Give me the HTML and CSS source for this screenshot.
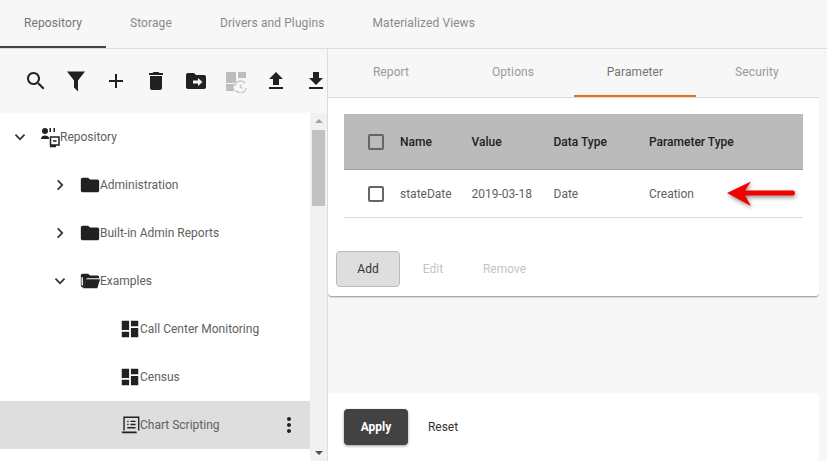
FILE: index.html
```html
<!DOCTYPE html>
<html lang="en">
<head>
    <meta charset="UTF-8">
    <meta name="viewport" content="width=device-width, initial-scale=1.0">
    <title>Repository</title>
    <link rel="stylesheet" href="styles.css">
</head>
<body>
    <nav class="main-tabs">
        <div class="main-tab active">Repository</div>
        <div class="main-tab">Storage</div>
        <div class="main-tab">Drivers and Plugins</div>
        <div class="main-tab">Materialized Views</div>
    </nav>

    <div class="content">
        <section class="left-pane">
            <div class="toolbar">
                <svg class="tool" viewBox="0 0 24 24"><path d="M15.5 14h-.79l-.28-.27C15.41 12.59 16 11.11 16 9.5 16 5.91 13.09 3 9.5 3S3 5.91 3 9.5 5.91 16 9.5 16c1.61 0 3.09-.59 4.23-1.57l.27.28v.79l5 4.99L20.49 19l-4.99-5zm-6 0C7.01 14 5 11.99 5 9.5S7.01 5 9.5 5 14 7.01 14 9.5 11.99 14 9.5 14z"/></svg>
                <svg class="tool" viewBox="0 0 24 24"><path d="M3 2.500h18l-7 9V22.500l-4-4v-7z"/></svg>
                <svg class="tool" viewBox="0 0 24 24"><path d="M19 13h-6v6h-2v-6H5v-2h6V5h2v6h6v2z"/></svg>
                <svg class="tool" viewBox="0 0 24 24"><path d="M6 19c0 1.100.9 2 2 2h8c1.100 0 2-.9 2-2V7H6v12zM19 4h-3.500l-1-1h-5l-1 1H5v2h14V4z"/></svg>
                <svg class="tool" viewBox="0 0 24 24"><path fill-rule="evenodd" d="M20 6h-8l-2-2H4c-1.100 0-2 .9-2 2v12c0 1.100.9 2 2 2h16c1.100 0 2-.9 2-2V8c0-1.100-.9-2-2-2zm-6 11v-2.500h-5v-3h5V9l4.500 4z"/></svg>
                <svg class="tool tool-off" viewBox="0 0 24 24">
                    <path d="M2 3h10v11H2zM14 3h8v6h-8zM2 15h10v7H2z"/>
                    <circle cx="16.500" cy="18" r="7" fill="#f7f7f7"/>
                    <path class="refresh" d="M11 17a5.500 5.500 0 0 1 10-2.500M22 19a5.500 5.500 0 0 1-10 2.500M16.500 15.500V18l2 1.500"/>
                </svg>
                <svg class="tool" viewBox="0 0 24 24"><path d="M9 16h6v-6h4l-7-7-7 7h4zm-4 2h14v2H5z"/></svg>
                <svg class="tool" viewBox="0 0 24 24"><path d="M19 9h-4V3H9v6H5l7 7 7-7zM5 18v2h14v-2H5z"/></svg>
            </div>

            <div class="tree-wrap">
                <ul class="tree">
                    <li class="node">
                        <svg class="toggle" viewBox="-2 -2 28 28"><path d="M7.410 8.590 12 13.170l4.590-4.580L18 10l-6 6-6-6z"/></svg>
                        <svg class="node-icon" viewBox="0 0 22 22">
                            <circle cx="6" cy="5" r="3"/>
                            <path d="M2 13c0-2.500 2-3.500 4-3.500s4 1 4 2.500v1zM10.500 2h1.500v4h-1.500zM14.500 2h1.500v4h-1.500z"/>
                            <path class="outline" d="M11.500 11h8.500v8h-8.500zM14 15h3.500M11 20.500h6"/>
                        </svg>
                        <span>Repository</span>
                    </li>
                    <li class="node level-1">
                        <svg class="toggle" viewBox="-2 -2 28 28"><path d="M8.590 16.590 13.170 12 8.590 7.410 10 6l6 6-6 6z"/></svg>
                        <svg class="node-icon" viewBox="0 0 24 24"><path d="M10 4H4c-1.100 0-2 .9-2 2v12c0 1.100.9 2 2 2h16c1.100 0 2-.9 2-2V8c0-1.100-.9-2-2-2h-8l-2-2z"/></svg>
                        <span>Administration</span>
                    </li>
                    <li class="node level-1">
                        <svg class="toggle" viewBox="-2 -2 28 28"><path d="M8.590 16.590 13.170 12 8.590 7.410 10 6l6 6-6 6z"/></svg>
                        <svg class="node-icon" viewBox="0 0 24 24"><path d="M10 4H4c-1.100 0-2 .9-2 2v12c0 1.100.9 2 2 2h16c1.100 0 2-.9 2-2V8c0-1.100-.9-2-2-2h-8l-2-2z"/></svg>
                        <span>Built-in Admin Reports</span>
                    </li>
                    <li class="node level-1">
                        <svg class="toggle" viewBox="-2 -2 28 28"><path d="M7.410 8.590 12 13.170l4.590-4.580L18 10l-6 6-6-6z"/></svg>
                        <svg class="node-icon" viewBox="0 0 24 24">
                            <path d="M4 4h6l2 2h8c1.100 0 2 .9 2 2v1H8.500L5 19H4c-1.100 0-2-.9-2-2V6c0-1.100.9-2 2-2z"/>
                            <path d="M8 10h15l-3 10H4.500z"/>
                            <path class="gap" d="M3.500 8v9"/>
                        </svg>
                        <span>Examples</span>
                    </li>
                    <li class="node level-2">
                        <span class="toggle"></span>
                        <svg class="node-icon" viewBox="0 0 24 24"><path d="M3 13h8V3H3v10zm0 8h8v-6H3v6zm10 0h8V11h-8v10zm0-18v6h8V3h-8z"/></svg>
                        <span>Call Center Monitoring</span>
                    </li>
                    <li class="node level-2">
                        <span class="toggle"></span>
                        <svg class="node-icon" viewBox="0 0 24 24"><path d="M3 13h8V3H3v10zm0 8h8v-6H3v6zm10 0h8V11h-8v10zm0-18v6h8V3h-8z"/></svg>
                        <span>Census</span>
                    </li>
                    <li class="node level-2 selected">
                        <span class="toggle"></span>
                        <svg class="node-icon" viewBox="0 0 24 24">
                            <path class="outline" d="M5.500 18V3.500h16V18M9 8h1.500M12.500 8H18M9 11.500h1.500M12.500 11.500H18M9 15h9"/>
                            <path d="M3 19h16c0 1.500.7 2 1.500 2H4.500C3.500 21 3 20 3 19z"/>
                        </svg>
                        <span>Chart Scripting</span>
                        <svg class="more" viewBox="0 0 24 24"><path d="M12 8c1.100 0 2-.9 2-2s-.9-2-2-2-2 .9-2 2 .9 2 2 2zm0 2c-1.100 0-2 .9-2 2s.9 2 2 2 2-.9 2-2-.9-2-2-2zm0 6c-1.100 0-2 .9-2 2s.9 2 2 2 2-.9 2-2-.9-2-2-2z"/></svg>
                    </li>
                </ul>
                <div class="scrollbar">
                    <div class="arrow-up"></div>
                    <div class="thumb"></div>
                    <div class="arrow-down"></div>
                </div>
            </div>
        </section>

        <section class="right-pane">
            <nav class="sub-tabs">
                <div class="sub-tab">Report</div>
                <div class="sub-tab">Options</div>
                <div class="sub-tab active">Parameter</div>
                <div class="sub-tab">Security</div>
            </nav>

            <div class="card param-card">
                <div class="param-table">
                    <div class="table-row table-head">
                        <div><span class="check"></span></div>
                        <div>Name</div>
                        <div>Value</div>
                        <div>Data Type</div>
                        <div>Parameter Type</div>
                    </div>
                    <div class="table-row">
                        <div><span class="check"></span></div>
                        <div>stateDate</div>
                        <div>2019-03-18</div>
                        <div>Date</div>
                        <div>Creation</div>
                    </div>
                </div>
                <div class="table-actions">
                    <button class="btn btn-add">Add</button>
                    <button class="btn btn-off">Edit</button>
                    <button class="btn btn-off">Remove</button>
                </div>
                <!-- annotation drawn on top of the screenshot -->
                <svg class="red-arrow" viewBox="0 0 72 26"><path d="M1 12 25 .5 19 9.500h48c2.500 0 2.500 5 0 5H19L25 25z"/></svg>
            </div>

            <div class="card footer-card">
                <button class="btn btn-apply">Apply</button>
                <button class="btn btn-reset">Reset</button>
            </div>
        </section>
    </div>
</body>
</html>
```

FILE: styles.css
```css
* {
    box-sizing: border-box;
}
html, body {
    height: 100%;
}
body {
    margin: 0;
    display: flex;
    flex-direction: column;
    overflow: hidden;
    background-color: #f7f7f7;
    font-family: Roboto, "Liberation Sans", sans-serif;
    font-size: 12px;
    color: #616161;
}

/* top tabs */
.main-tabs {
    display: flex;
    flex: none;
    height: 49px;
    border-bottom: 1px solid #ddd;
}
.main-tab {
    display: flex;
    align-items: center;
    height: 48px;
    padding: 0 24px;
    border-bottom: 2px solid transparent;
    letter-spacing: 0.1px;
    color: #8a8a8a;
}
.main-tab.active {
    color: #757575;
    border-bottom-color: #444;
}

.content {
    display: flex;
    flex: 1;
    min-height: 0;
}

/* left side */
.left-pane {
    display: flex;
    flex-direction: column;
    flex: none;
    width: 328px;
    border-right: 1px solid #ddd;
    overflow: hidden;
}
.toolbar {
    display: flex;
    flex: none;
    align-items: center;
    gap: 16px;
    height: 64px;
    padding-left: 24px;
}
.tool {
    flex: none;
    width: 24px;
    height: 24px;
    fill: #212121;
}
.tool-off {
    fill: #bdbdbd;
}
.tool-off .refresh {
    fill: none;
    stroke: #c8c8c8;
    stroke-width: 1.5;
}
.tree-wrap {
    display: flex;
    flex: 1;
    min-height: 0;
    background-color: #fff;
}
.tree {
    flex: 1;
    margin: 0;
    padding: 0;
    list-style: none;
}
.node {
    display: flex;
    align-items: center;
    height: 48px;
    padding-left: 8px;
}
.level-1 {
    padding-left: 48px;
}
.level-2 {
    padding-left: 88px;
}
.selected {
    background-color: #dedede;
}
.toggle {
    flex: none;
    width: 24px;
    height: 24px;
    margin-right: 7px;
    fill: #333;
}
.node-icon {
    flex: none;
    width: 22px;
    height: 22px;
    margin-right: -1px;
    fill: #212121;
}
.node-icon .outline {
    fill: none;
    stroke: #212121;
    stroke-width: 1.5;
}
.node-icon .gap {
    fill: none;
    stroke: #fff;
    stroke-width: 1.5;
}
.more {
    flex: none;
    width: 24px;
    height: 24px;
    margin-left: auto;
    margin-right: 9px;
    fill: #212121;
}
.scrollbar {
    display: flex;
    flex-direction: column;
    align-items: center;
    flex: none;
    width: 17px;
    background-color: #f1f1f1;
}
.arrow-up, .arrow-down {
    flex: none;
    width: 0;
    height: 0;
    border-left: 4px solid transparent;
    border-right: 4px solid transparent;
}
.arrow-up {
    margin-top: 6px;
    border-bottom: 4px solid #a3a3a3;
}
.arrow-down {
    margin-top: auto;
    margin-bottom: 6px;
    border-top: 4px solid #505050;
}
.thumb {
    flex: none;
    width: 13px;
    height: 76px;
    margin-top: 7px;
    background-color: #c1c1c1;
}

/* right side */
.right-pane {
    display: flex;
    flex-direction: column;
    flex: none;
    width: 491px;
}
.sub-tabs {
    display: flex;
    flex: none;
    height: 49px;
    padding-left: 2px;
    border-bottom: 1px solid #ddd;
}
.sub-tab {
    display: flex;
    align-items: center;
    justify-content: center;
    width: 122px;
    height: 48px;
    border-bottom: 2px solid transparent;
    letter-spacing: 0.1px;
    color: #9a9a9a;
}
.sub-tab.active {
    color: #757575;
    border-bottom-color: #e8711e;
}
.card {
    background-color: #fff;
    border-radius: 4px;
}
.param-card {
    position: relative;
    flex: none;
    height: 199px;
    padding: 16px 16px 0;
    border-radius: 0 0 4px 4px;
    border-bottom: 1px solid #aaa;
    box-shadow: 0 1px 1px rgba(0,0,0,0.12);
}
.table-row {
    display: grid;
    grid-template-columns: 56px 71.5px 82px 95.5px 1fr;
    align-items: center;
    height: 48px;
    border-bottom: 1px solid #ddd;
}
.table-head {
    height: 56px;
    background-color: #bbb;
    color: #212121;
    font-weight: 500;
    border-bottom: 1px solid #a0a0a0;
}
.check {
    display: block;
    width: 16px;
    height: 16px;
    margin-left: 24px;
    border: 2px solid #666;
    border-radius: 2px;
    background-color: #fff;
}
.table-head .check {
    background-color: transparent;
}
.table-actions {
    display: flex;
    margin: 33px 0 0 -8px;
}
.btn {
    height: 36px;
    padding: 0;
    border: 0;
    border-radius: 4px;
    background: none;
    font-family: inherit;
    font-size: 12px;
}
.btn-add {
    width: 64px;
    margin-right: 1px;
    background-color: #dedede;
    border: 1px solid #bbb;
    color: #333;
}
.btn-off {
    width: 64px;
    color: #c4c4c4;
}
.btn-off + .btn-off {
    width: 91px;
    margin-left: -6px;
}
.red-arrow {
    position: absolute;
    left: 398px;
    top: 83px;
    width: 72px;
    height: 26px;
    fill: #f40000;
    filter: drop-shadow(1px 2px 2px rgba(0,0,0,0.45));
}
.footer-card {
    display: flex;
    flex: none;
    align-items: flex-start;
    height: 68px;
    margin-top: 96px;
    padding: 16px;
}
.btn-apply {
    width: 64px;
    background-color: #424242;
    color: #fff;
    font-weight: 700;
    box-shadow: 0 1px 3px rgba(0,0,0,0.4);
}
.btn-reset {
    width: 70px;
    color: #333;
}
```
